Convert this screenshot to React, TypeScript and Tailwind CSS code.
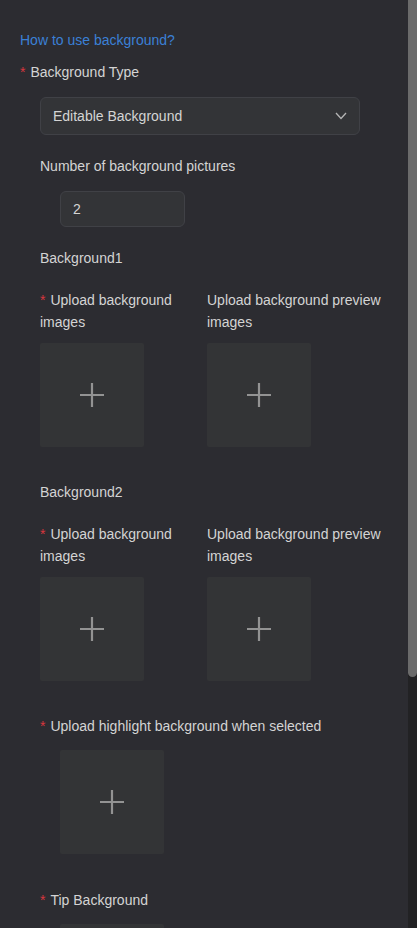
import React from 'react';

const font = { fontFamily: '"Liberation Sans", Arial, sans-serif' };

const Req = () => <span className="text-[#d9363e] mr-[5px]">*</span>;

const UploadBox: React.FC<{ className?: string }> = ({ className = '' }) => (
  <div className={`w-[104px] h-[104px] bg-[#333436] rounded-[2px] flex items-center justify-center ${className}`}>
    <svg width="26" height="26" viewBox="0 0 26 26">
      <path d="M13 1v24M1 13h24" stroke="#939393" strokeWidth="2.2" />
    </svg>
  </div>
);

const BackgroundGroup: React.FC<{ title: string }> = ({ title }) => (
  <div className="pl-[40px]">
    <div className="h-[22px] leading-[22px]">{title}</div>
    <div className="flex mt-[20px]">
      <div className="w-[167px]">
        <div className="leading-[22px] pr-2">
          <Req />Upload background images
        </div>
        <UploadBox className="mt-[10px]" />
      </div>
      <div className="w-[185px]">
        <div className="leading-[22px]">Upload background preview images</div>
        <UploadBox className="mt-[10px]" />
      </div>
    </div>
  </div>
);

export default function App() {
  return (
    <div className="w-[417px] h-[928px] bg-[#2c2c31] flex overflow-hidden" style={font}>
      <div className="flex-1 text-[14px] text-[#d4d4d4] pt-[29px]">
        <div className="pl-[20px] text-[#3b80d6] leading-[22px]">How to use background?</div>
        <div className="pl-[20px] mt-[10px] leading-[22px]">
          <Req />Background Type
        </div>
        <div className="ml-[40px] mt-[14px] w-[320px] h-[38px] bg-[#333437] border border-[#404146] rounded-[6px] flex items-center justify-between px-[12px]">
          <span>Editable Background</span>
          <svg width="12" height="8" viewBox="0 0 12 8">
            <path d="M1 1l5 5.5L11 1" stroke="#b5b5b5" strokeWidth="1.3" fill="none" />
          </svg>
        </div>
        <div className="pl-[40px] mt-[20px] leading-[22px]">Number of background pictures</div>
        <div className="ml-[60px] mt-[14px] w-[125px] h-[36px] bg-[#333437] border border-[#404146] rounded-[6px] flex items-center px-[12px]">
          2
        </div>
        <div className="mt-[20px]">
          <BackgroundGroup title="Background1" />
        </div>
        <div className="mt-[34px]">
          <BackgroundGroup title="Background2" />
        </div>
        <div className="pl-[40px] mt-[34px] leading-[22px]">
          <Req />Upload highlight background when selected
        </div>
        <UploadBox className="ml-[60px] mt-[13px]" />
        <div className="pl-[40px] mt-[35px] leading-[22px]">
          <Req />Tip Background
        </div>
        <UploadBox className="ml-[60px] mt-[13px]" />
      </div>
      <div className="w-[9px] h-full bg-[#222224] flex flex-col">
        <div className="h-[677px] bg-[#6b6b6b] rounded-b-[5px]" />
      </div>
    </div>
  );
}
